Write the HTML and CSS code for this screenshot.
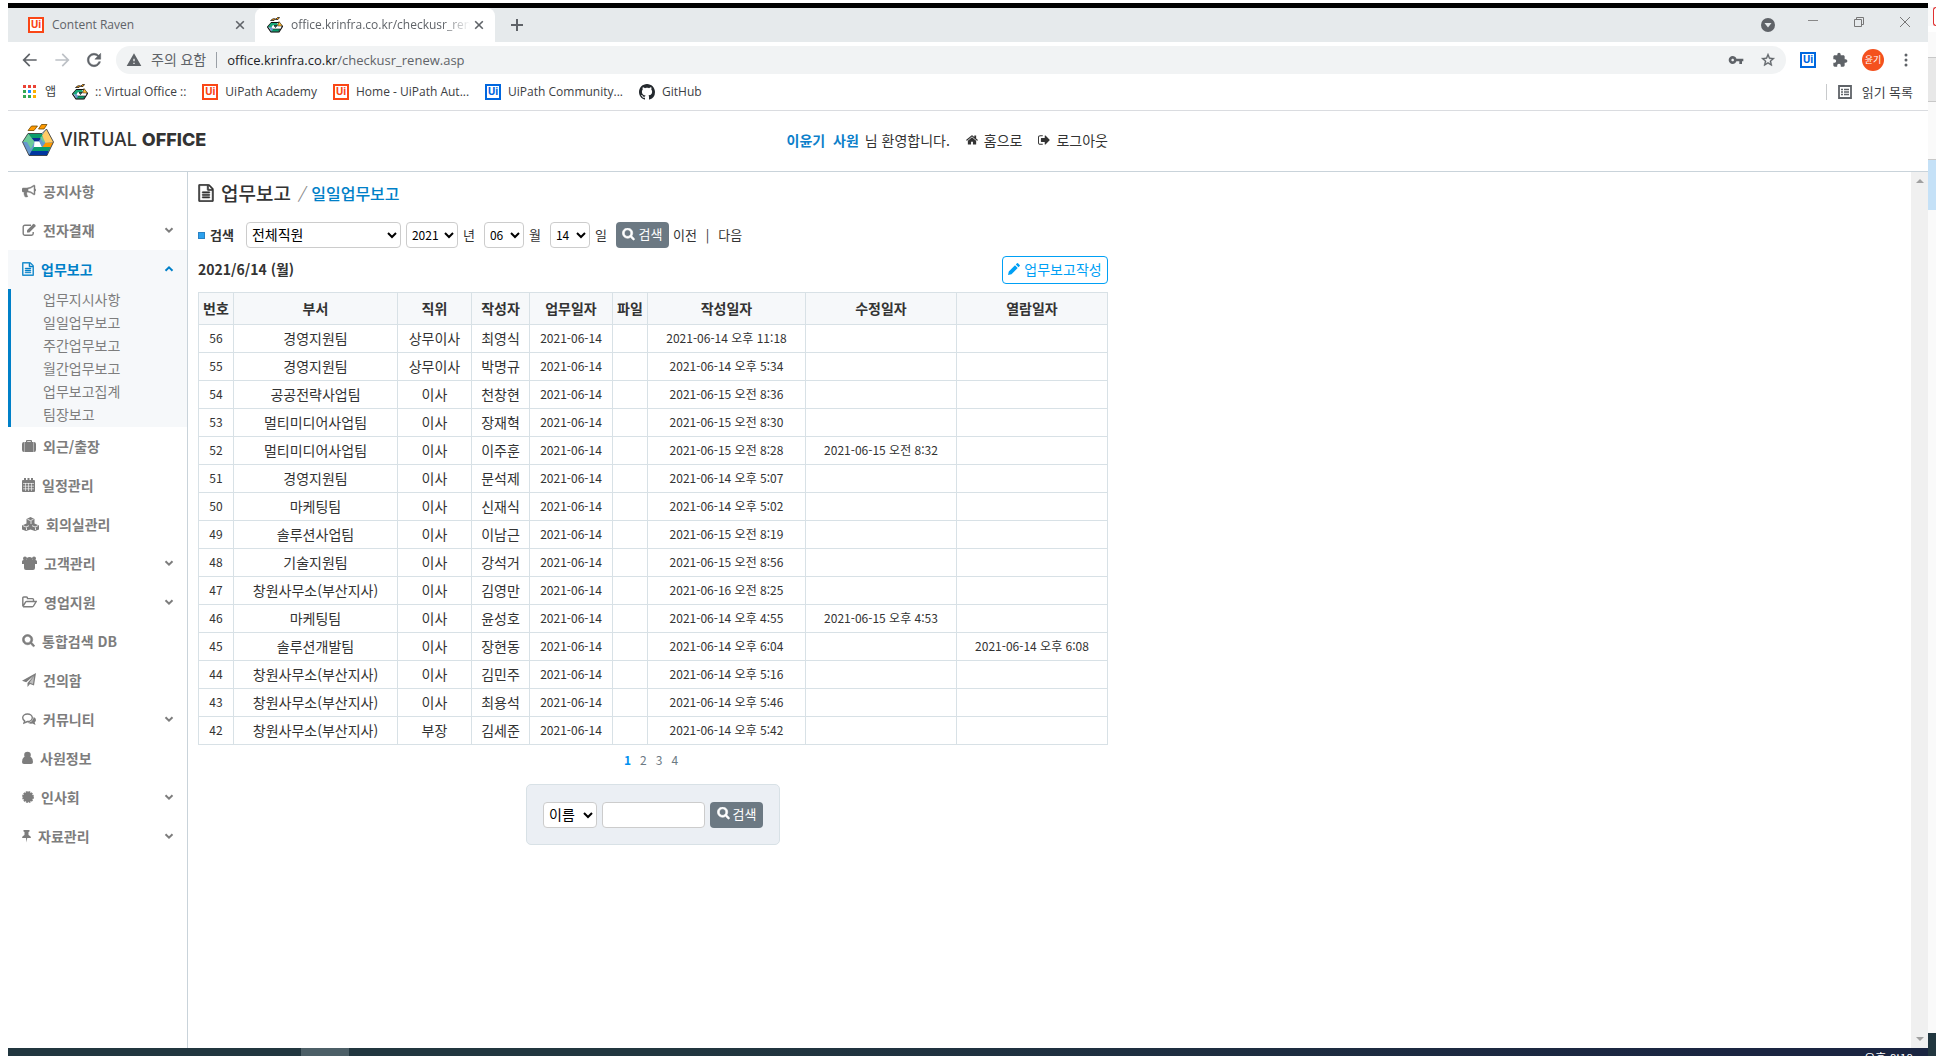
FILE: index.html
```html
<!DOCTYPE html>
<html lang="ko">
<head>
<meta charset="utf-8">
<title>:: Virtual Office ::</title>
<link rel="stylesheet" href="styles.css">
</head>
<body>
<svg class="defs" aria-hidden="true">
  <defs>
    <symbol id="search" viewBox="0 128 1792 1792"><path stroke="currentColor" stroke-width="90" d="M1216 832q0-185-131.500-316.500t-316.500-131.500-316.500 131.500-131.500 316.500 131.500 316.500 316.500 131.500 316.500-131.500 131.500-316.500zm512 832q0 52-38 90t-90 38q-54 0-90-38l-343-342q-179 124-399 124-143 0-273.500-55.500t-225-150-150-225-55.500-273.500 55.500-273.500 150-225 225-150 273.500-55.500 273.500 55.500 225 150 150 225 55.500 273.500q0 220-124 399l343 343q37 37 37 90z"/></symbol>
    <symbol id="doc" viewBox="96 -32 1600 1856"><path stroke="currentColor" stroke-width="60" d="M1596 380q28 28 48 76t20 88v1152q0 40-28 68t-68 28h-1344q-40 0-68-28t-28-68v-1600q0-40 28-68t68-28h896q40 0 88 20t76 48zm-444-244v376h376q-10-29-22-41l-313-313q-12-12-41-22zm384 1528v-1024h-416q-40 0-68-28t-28-68v-416h-768v1536h1280zm-1024-864q0-14 9-23t23-9h704q14 0 23 9t9 23v64q0 14-9 23t-23 9h-704q-14 0-23-9t-9-23v-64zm736 224q14 0 23 9t9 23v64q0 14-9 23t-23 9h-704q-14 0-23-9t-9-23v-64q0-14 9-23t23-9h704zm0 256q14 0 23 9t9 23v64q0 14-9 23t-23 9h-704q-14 0-23-9t-9-23v-64q0-14 9-23t23-9h704z"/></symbol>
    <symbol id="down" viewBox="0 0 10 10"><path d="M1.500 3.300 5 6.700 8.500 3.300" fill="none" stroke="currentColor" stroke-width="2"/></symbol>
    <symbol id="up" viewBox="0 0 10 10"><path d="M1.500 6.700 5 3.300 8.500 6.700" fill="none" stroke="currentColor" stroke-width="2"/></symbol>
    <symbol id="cross" viewBox="0 0 10 10"><path d="M1.200 1.200 8.800 8.800M8.800 1.200 1.200 8.800" fill="none" stroke="currentColor" stroke-width="1.600"/></symbol>
    <symbol id="brand" viewBox="0 0 32 32">
      <path d="M6 6.500 9.500 2h6L12 6.500zM16.500 5 19.500.5h5.500L22 5z" fill="#f90" stroke="#704a00" stroke-width=".8"/>
      <path d="M6 9.500 .5 18 7 31.500h18L31.500 18 24.500 5 20 10z" fill="#6799ce"/>
      <path d="M6 9.500h14l2.500 4.500H9z" fill="#0a9c6c"/><path d="M9 14h11l-1 3.500H12z" fill="#0b2d94"/>
      <path d="M6 9.500 12.500 17.500 9 25 5 18H.5z" fill="#6ccb99"/>
      <path d="M12.500 17.500h5l2.500 5.500h-8z" fill="#fff"/>
      <path d="M19.500 13.500 23 19l-3 4-3-6z" fill="#6799ce"/><path d="M20 12l3 5-1 2-4-5z" fill="#6ccb99"/>
      <path d="M24.500 5 31.500 18 23.500 19 20 11.500z" fill="#fc6"/>
      <path d="M31.500 18.500 28.500 23.500H20l3.500-4.800z" fill="#f90"/>
      <path d="M12 23h16.500l-2 4H9.500z" fill="#0a9c6c"/><path d="M9.500 27h17L25 31.500H7z" fill="#0036a0"/>
      <path d="M24.500 5 31.500 18 25 31.500H7L.5 18 6 9.500h14z" fill="none" stroke="#333" stroke-width=".8"/>
    </symbol>
    <symbol id="favicon" viewBox="0 0 16 16">
      <path d="M3.500 3.500 6 1.800h2.500L7 3.500zM8.500 2.500 10.500.5h2L11 2.500z" fill="#f90" stroke="#222" stroke-width=".8"/>
      <path d="M4.500 5.500h7L15.500 9.500 12 15H4L.6 10z" fill="#fff" stroke="#111" stroke-width="1.200"/>
      <path d="M4 6h6l1 2H6l-2 3-3-1z" fill="#18a878"/><path d="M12 4.500 15.500 9 10.500 9z" fill="#fb3" stroke="#111" stroke-width=".5"/>
      <path d="M5 12h8l-1.500 2.700H4z" fill="#0a9c6c" stroke="#111" stroke-width=".6"/><path d="M2 10.500 4.500 14.500 6 12.500 4.500 10z" fill="#6799ce"/>
      <path d="M7 8.500h3l-1.500 2z" fill="#18a878" stroke="#111" stroke-width=".8"/>
    </symbol>
  </defs>
</svg>
<div class="screen">
<div class="window">
  <div class="tabs">
    <div class="tab"><span class="ui">Ui</span><span class="tab-title">Content Raven</span><svg class="x"><use href="#cross"/></svg></div>
    <div class="tab active"><svg class="fav"><use href="#favicon"/></svg><span class="tab-title">office.krinfra.co.kr/checkusr_rene</span><svg class="x"><use href="#cross"/></svg></div>
    <svg class="plus" viewBox="0 0 12 12"><path d="M6 0v12M0 6h12" stroke="#5f6368" stroke-width="2"/></svg>
    <div class="controls">
      <svg width="14" height="14" viewBox="0 0 14 14"><circle cx="7" cy="7" r="7" fill="#5f6368"/><path d="M3.500 5h7L7 9.500z" fill="#e6eaec"/></svg>
      <svg width="10" height="14" viewBox="0 0 10 14"><path d="M0 4.500h10" stroke="#888"/></svg>
      <svg width="10" height="14" viewBox="0 0 10 14"><path d="M.5 3.500h7v7h-7zM2.500 3.500v-2h7v7h-2" fill="none" stroke="#777"/></svg>
      <svg width="10" height="14" viewBox="0 0 10 14"><path d="M0 1l10 10M10 1 0 11" stroke="#777"/></svg>
    </div>
  </div>
  <div class="toolbar">
    <svg class="nav" viewBox="0 0 24 24"><path d="M20 11H6.800l5.600-5.600L11 4l-8 8 8 8 1.400-1.400L6.800 13H20z"/></svg>
    <svg class="nav off" viewBox="0 0 24 24"><path d="M13 4l-1.400 1.400 5.600 5.600H4v2h13.200l-5.600 5.600L13 20l8-8z"/></svg>
    <svg class="nav" viewBox="0 0 24 24"><path d="M17.650 6.350C16.200 4.900 14.210 4 12 4c-4.420 0-7.990 3.580-7.990 8s3.570 8 7.990 8c3.730 0 6.840-2.550 7.730-6h-2.080c-.82 2.330-3.040 4-5.650 4-3.310 0-6-2.690-6-6s2.690-6 6-6c1.660 0 3.140.69 4.220 1.780L13 11h7V4l-2.350 2.350z" stroke="#5f6368" stroke-width=".6"/></svg>
    <div class="address">
      <svg width="16" height="16" viewBox="0 0 24 24"><path d="M1 21h22L12 2 1 21zm12-3h-2v-2h2v2zm0-4h-2v-4h2v4z"/></svg>
      <span class="warn">주의 요함</span>
      <span class="url"><b>office.krinfra.co.kr</b>/checkusr_renew.asp</span>
      <svg width="16" height="16" viewBox="0 0 24 24"><path d="M12.650 10C11.830 7.670 9.610 6 7 6c-3.310 0-6 2.690-6 6s2.690 6 6 6c2.610 0 4.830-1.670 5.650-4H17v4h4v-4h2v-4H12.650zM7 14c-1.100 0-2-.9-2-2s.9-2 2-2 2 .9 2 2-.9 2-2 2z"/></svg>
      <svg width="16" height="16" viewBox="0 0 24 24"><path stroke="#5f6368" stroke-width=".5" d="M22 9.240l-7.190-.62L12 2 9.190 8.630 2 9.240l5.460 4.730L5.820 21 12 17.270 18.180 21l-1.630-7.030L22 9.240zM12 15.400l-3.760 2.270 1-4.280-3.320-2.880 4.380-.38L12 6.100l1.710 4.040 4.380.38-3.320 2.880 1 4.280L12 15.400z"/></svg>
    </div>
    <div class="extensions">
      <span class="ui blue">Ui</span>
      <svg width="16" height="16" viewBox="0 0 24 24"><path d="M20.500 11H19V7c0-1.100-.9-2-2-2h-4V3.500C13 2.120 11.880 1 10.500 1S8 2.120 8 3.500V5H4c-1.100 0-1.990.9-1.990 2v3.800H3.500c1.490 0 2.700 1.210 2.700 2.700s-1.210 2.700-2.700 2.700H2V20c0 1.100.9 2 2 2h3.800v-1.500c0-1.490 1.210-2.700 2.700-2.700 1.490 0 2.700 1.210 2.700 2.700V22H17c1.100 0 2-.9 2-2v-4h1.500c1.380 0 2.500-1.120 2.500-2.500S21.880 11 20.500 11z"/></svg>
      <span class="avatar">윤기</span>
      <svg width="4" height="14" viewBox="0 0 4 14"><circle cx="2" cy="2" r="1.500"/><circle cx="2" cy="7" r="1.500"/><circle cx="2" cy="12" r="1.500"/></svg>
    </div>
  </div>
  <div class="bookmarks">
    <a href="#"><svg width="16" height="16" viewBox="0 0 16 16"><path d="M1 1h3v3H1zM6 1h3v3H6zM11 1h3v3h-3z" fill="#ea4335"/><path d="M1 6h3v3H1zM1 11h3v3H1zM6 11h3v3H6z" fill="#34a853"/><path d="M6 6h3v3H6z" fill="#1a8cff"/><path d="M11 6h3v3h-3zM11 11h3v3h-3z" fill="#fbaf00"/></svg>앱</a>
    <a href="#"><svg class="fav"><use href="#favicon"/></svg>:: Virtual Office ::</a>
    <a href="#"><span class="ui">Ui</span>UiPath Academy</a>
    <a href="#"><span class="ui">Ui</span>Home - UiPath Aut...</a>
    <a href="#"><span class="ui blue">Ui</span>UiPath Community...</a>
    <a href="#"><svg width="16" height="16" viewBox="0 0 16 16"><path fill="#24292e" d="M8 0C3.580 0 0 3.580 0 8c0 3.540 2.290 6.530 5.470 7.590.4.070.55-.17.55-.38 0-.19-.01-.82-.01-1.490-2.010.37-2.530-.49-2.690-.94-.09-.23-.48-.94-.82-1.130-.28-.15-.68-.52-.01-.53.63-.01 1.080.58 1.230.82.72 1.210 1.870.87 2.330.66.070-.52.28-.87.51-1.070-1.780-.2-3.640-.89-3.640-3.950 0-.87.31-1.590.82-2.150-.08-.2-.36-1.020.08-2.120 0 0 .67-.21 2.200.82.64-.18 1.320-.27 2-.27s1.360.09 2 .27c1.530-1.040 2.200-.82 2.200-.82.44 1.100.16 1.920.08 2.120.51.56.82 1.270.82 2.150 0 3.070-1.870 3.750-3.650 3.950.29.25.54.73.54 1.480 0 1.070-.01 1.930-.01 2.200 0 .21.15.46.55.38A8.010 8.010 0 0016 8c0-4.420-3.580-8-8-8z"/></svg>GitHub</a>
    <a href="#" class="reading"><svg width="14" height="14" viewBox="0 0 14 14"><path d="M1 1h12v12H1z" fill="none" stroke="#5f6368" stroke-width="1.800"/><path d="M3 4.500h2M6 4.500h5M3 7h2M6 7h5M3 9.500h2M6 9.500h5" stroke="#5f6368" stroke-width="1.400"/></svg>읽기 목록</a>
  </div>

  <header class="site-header">
    <div class="user-area">
      <a href="#" class="logo"><svg width="32" height="32"><use href="#brand"/></svg><span>VIRTUAL <b>OFFICE</b></span></a>
      <p class="user"><span class="welcome"><b>이윤기&nbsp; 사원</b> 님 환영합니다.</span>
        <a href="#"><svg width="12" height="12" viewBox="64 192 1664 1408"><path d="M1472 992v480q0 26-19 45t-45 19h-384v-384h-256v384h-384q-26 0-45-19t-19-45v-480q0-1 .5-3t.5-3l575-474 575 474q1 2 1 6zm223-69l-62 74q-8 9-21 11h-3q-13 0-21-7l-692-577-692 577q-12 8-24 7-13-2-21-11l-62-74q-8-10-7-23.500t11-21.500l719-599q32-26 76-26t76 26l244 204v-195q0-14 9-23t23-9h192q14 0 23 9t9 23v408l219 182q10 8 11 21.500t-7 23.500z"/></svg>홈으로</a>
        <a href="#"><svg width="12" height="12" viewBox="64 192 1600 1408"><path d="M704 1440q0 4 1 20t.5 26.500-3 23.500-10 19.500-20.500 6.500h-320q-119 0-203.500-84.500t-84.500-203.500v-704q0-119 84.500-203.500t203.500-84.500h320q13 0 22.500 9.500t9.500 22.500q0 4 1 20t.5 26.500-3 23.500-10 19.500-20.500 6.500h-320q-66 0-113 47t-47 113v704q0 66 47 113t113 47h312l11.500 1 11.500 3 8 5.500 7 9 2 13.500zm928-544q0 26-19 45l-544 544q-19 19-45 19t-45-19-19-45v-288h-448q-26 0-45-19t-19-45v-384q0-26 19-45t45-19h448v-288q0-26 19-45t45-19 45 19l544 544q19 19 19 45z"/></svg>로그아웃</a></p>
    </div>
  </header>

  <div class="body">
    <nav class="side">
      <a href="#"><svg width="14" height="14" viewBox="0 0 1792 1792"><path stroke="currentColor" stroke-width="60" d="M1664 640q53 0 90.500 37.500t37.500 90.500-37.500 90.500-90.500 37.500v384q0 52-38 90t-90 38q-417-347-812-380-58 19-91 66t-31 100.500 40 92.500q-20 33-23 65.500t6 58 33.500 55 48 50 61.500 50.500q-29 58-111.500 83t-168.500 11.500-132-55.500q-7-23-29.500-87.500t-32-94.500-23-89-15-101 3.500-98.500 22-110.500h-122q-66 0-113-47t-47-113v-192q0-66 47-113t113-47h480q435 0 896-384 52 0 90 38t38 90v384zm-128 604v-954q-394 302-768 343v270q377 42 768 341z"/></svg>공지사항</a>
      <a href="#"><svg width="14" height="14" viewBox="0 0 14 14"><path d="M9 2.200H3A1.700 1.700 0 0 0 1.200 4v6.500a1.700 1.700 0 0 0 1.800 1.700h6.500a1.700 1.700 0 0 0 1.700-1.700V9" fill="none" stroke="currentColor" stroke-width="1.400"/><path d="M5 7.200 11 1.200a1 1 0 0 1 1.400 0l1 1a1 1 0 0 1 0 1.400l-6 6H5z"/></svg>전자결재<svg class="chev"><use href="#down"/></svg></a>
      <div class="open">
        <a href="#"><svg width="12" height="14"><use href="#doc"/></svg>업무보고<svg class="chev"><use href="#up"/></svg></a>
        <div class="sub">
          <a href="#">업무지시사항</a><a href="#">일일업무보고</a><a href="#">주간업무보고</a><a href="#">월간업무보고</a><a href="#">업무보고집계</a><a href="#">팀장보고</a>
        </div>
      </div>
      <a href="#"><svg width="14" height="14" viewBox="0 0 14 14"><path d="M4 3V2q0-1 1-1h4q1 0 1 1v1h2q2 0 2 2v6q0 2-2 2H2q-2 0-2-2V5q0-2 2-2zm1.200 0h3.600V2.200H5.200z"/><path d="M2.500 3v10M11.500 3v10" stroke="#fff" stroke-width=".4"/></svg>외근/출장</a>
      <a href="#"><svg width="13" height="14" viewBox="0 0 13 14"><path d="M1 2h11q1 0 1 1v10q0 1-1 1H1q-1 0-1-1V3q0-1 1-1z"/><path d="M2 0h2v3.500H2zM5.500 0h2v3.500h-2zM9 0h2v3.500H9z"/><path d="M1 5.500h11M1 8.200h11M1 10.800h11M3.500 5v8M6.500 5v8M9.500 5v8" stroke="#fff" stroke-width=".6"/></svg>일정관리</a>
      <a href="#"><svg width="17" height="14" viewBox="0 0 17 14"><path d="M8.500 0 12.500 2v4.500L17 8.500v4L13 14l-4.500-1.500L4 14 0 12.500v-4l4.500-2V2z"/><path d="M5.500 2.300 8.500 3.600l3-1.300M1 8.700l3 1.300 3-1.300M10 8.700l3 1.300 3-1.300M9 4v3M4.500 10.500V13M13.500 10.500V13" stroke="#fff" fill="none" stroke-width=".8"/></svg>회의실관리</a>
      <a href="#"><svg width="15" height="14" viewBox="0 0 15 14"><circle cx="3" cy="2.500" r="2"/><circle cx="12" cy="2.500" r="2"/><circle cx="7.500" cy="4" r="3"/><path d="M0 8V5.500Q0 4 1.500 4h12Q15 4 15 5.500V8h-2v4q0 2-2 2H4q-2 0-2-2V8z"/></svg>고객관리<svg class="chev"><use href="#down"/></svg></a>
      <a href="#"><svg width="15" height="14" viewBox="0 0 15 14"><path d="M.8 11.500V3q0-1 1-1h2.700q1 0 1 1v.6h5q1 0 1 1v2M.8 11.500 3.700 7q.3-.5 1-.5h9.500L11.500 11q-.5.800-1.200.8H1" fill="none" stroke="currentColor" stroke-width="1.400"/></svg>영업지원<svg class="chev"><use href="#down"/></svg></a>
      <a href="#"><svg width="13" height="14"><use href="#search"/></svg>통합검색 DB</a>
      <a href="#"><svg width="14" height="14" viewBox="0 0 14 14"><path d="M14 0 12 12.500 8 11 5.500 14V10L12 2.500 4.200 9.300 0 7.700z"/><path d="M12.200 3 7.500 9.600l3.500 1.400z" fill="#fff" opacity=".5"/></svg>건의함</a>
      <a href="#"><svg width="14" height="14" viewBox="0 0 14 14"><path d="M5.500 2C8 2 10.300 3.500 10.300 5.700S8 9.500 5.500 9.500L2 11l.6-2.200C1.400 8 .7 7 .7 5.700.7 3.500 3 2 5.500 2z" fill="none" stroke="currentColor" stroke-width="1.400"/><path d="M11.700 5q2.300 1 2.300 3 0 1.500-1.300 2.300L13.500 13l-3-1.500Q7 12 5.300 10.500 11 10.500 11.700 5z"/></svg>커뮤니티<svg class="chev"><use href="#down"/></svg></a>
      <a href="#"><svg width="11" height="14" viewBox="0 0 11 14"><circle cx="5.500" cy="4" r="3.300"/><path d="M2 6h7q2 1.500 2 5 0 2-2 2H2q-2 0-2-2 0-3.500 2-5z"/></svg>사원정보</a>
      <a href="#"><svg width="12" height="14" viewBox="0 0 12 14"><circle cx="6" cy="7" r="5"/><circle cx="6" cy="7" r="5" fill="none" stroke="currentColor" stroke-width="1.800" stroke-dasharray="1.800 .8"/></svg>인사회<svg class="chev"><use href="#down"/></svg></a>
      <a href="#"><svg width="9" height="14" viewBox="0 0 9 14"><path d="M1.500 1h6v1.500l-1 .5v3Q9 7 9 9H5.200L4.500 13.500 4 9H0q0-2 2.500-3V3l-1-.5z"/></svg>자료관리<svg class="chev"><use href="#down"/></svg></a>
    </nav>

    <main class="content">
      <h1><svg width="16" height="18"><use href="#doc"/></svg>업무보고 <i>/</i> <a href="#">일일업무보고</a></h1>
      <form class="filter">
        <span class="bullet"></span><label class="lead" for="emp">검색</label>
        <select id="emp" class="emp"><option>전체직원</option></select>
        <select id="year" class="num year"><option>2021</option></select><label for="year">년</label>
        <select id="month" class="num"><option>06</option></select><label for="month">월</label>
        <select id="day" class="num"><option>14</option></select><label for="day">일</label>
        <button type="button" class="btn"><svg width="13" height="13"><use href="#search"/></svg>검색</button>
        <span class="pager"><a href="#">이전</a><span>|</span><a href="#">다음</a></span>
      </form>
      <div class="date-row"><strong>2021/6/14 (월)</strong><button type="button" class="write"><svg width="12" height="12" viewBox="0 0 12 12"><path d="M0 12 .8 8.500 7 2.300 9.700 5 3.500 11.200zM7.800 1.500l1.200-1.200q.5-.5 1 0L11.700 2q.5.500 0 1L10.500 4.200z"/></svg>업무보고작성</button></div>
      <table>
        <colgroup><col class="c1"><col class="c2"><col class="c3"><col class="c4"><col class="c5"><col class="c6"><col class="c7"><col class="c8"><col class="c9"></colgroup>
        <thead><tr><th>번호</th><th>부서</th><th>직위</th><th>작성자</th><th>업무일자</th><th>파일</th><th>작성일자</th><th>수정일자</th><th>열람일자</th></tr></thead>
        <tbody>
          <tr><td>56</td><td>경영지원팀</td><td>상무이사</td><td>최영식</td><td>2021-06-14</td><td></td><td>2021-06-14 오후 11:18</td><td></td><td></td></tr>
          <tr><td>55</td><td>경영지원팀</td><td>상무이사</td><td>박명규</td><td>2021-06-14</td><td></td><td>2021-06-14 오후 5:34</td><td></td><td></td></tr>
          <tr><td>54</td><td>공공전략사업팀</td><td>이사</td><td>천창현</td><td>2021-06-14</td><td></td><td>2021-06-15 오전 8:36</td><td></td><td></td></tr>
          <tr><td>53</td><td>멀티미디어사업팀</td><td>이사</td><td>장재혁</td><td>2021-06-14</td><td></td><td>2021-06-15 오전 8:30</td><td></td><td></td></tr>
          <tr><td>52</td><td>멀티미디어사업팀</td><td>이사</td><td>이주훈</td><td>2021-06-14</td><td></td><td>2021-06-15 오전 8:28</td><td>2021-06-15 오전 8:32</td><td></td></tr>
          <tr><td>51</td><td>경영지원팀</td><td>이사</td><td>문석제</td><td>2021-06-14</td><td></td><td>2021-06-14 오후 5:07</td><td></td><td></td></tr>
          <tr><td>50</td><td>마케팅팀</td><td>이사</td><td>신재식</td><td>2021-06-14</td><td></td><td>2021-06-14 오후 5:02</td><td></td><td></td></tr>
          <tr><td>49</td><td>솔루션사업팀</td><td>이사</td><td>이남근</td><td>2021-06-14</td><td></td><td>2021-06-15 오전 8:19</td><td></td><td></td></tr>
          <tr><td>48</td><td>기술지원팀</td><td>이사</td><td>강석거</td><td>2021-06-14</td><td></td><td>2021-06-15 오전 8:56</td><td></td><td></td></tr>
          <tr><td>47</td><td>창원사무소(부산지사)</td><td>이사</td><td>김영만</td><td>2021-06-14</td><td></td><td>2021-06-16 오전 8:25</td><td></td><td></td></tr>
          <tr><td>46</td><td>마케팅팀</td><td>이사</td><td>윤성호</td><td>2021-06-14</td><td></td><td>2021-06-14 오후 4:55</td><td>2021-06-15 오후 4:53</td><td></td></tr>
          <tr><td>45</td><td>솔루션개발팀</td><td>이사</td><td>장현동</td><td>2021-06-14</td><td></td><td>2021-06-14 오후 6:04</td><td></td><td>2021-06-14 오후 6:08</td></tr>
          <tr><td>44</td><td>창원사무소(부산지사)</td><td>이사</td><td>김민주</td><td>2021-06-14</td><td></td><td>2021-06-14 오후 5:16</td><td></td><td></td></tr>
          <tr><td>43</td><td>창원사무소(부산지사)</td><td>이사</td><td>최용석</td><td>2021-06-14</td><td></td><td>2021-06-14 오후 5:46</td><td></td><td></td></tr>
          <tr><td>42</td><td>창원사무소(부산지사)</td><td>부장</td><td>김세준</td><td>2021-06-14</td><td></td><td>2021-06-14 오후 5:42</td><td></td><td></td></tr>
        </tbody>
      </table>
      <div class="pages"><a href="#" class="on">1</a><a href="#">2</a><a href="#">3</a><a href="#">4</a></div>
      <form class="find">
        <select class="by" aria-label="검색 조건"><option>이름</option></select>
        <input type="text" aria-label="검색어">
        <button type="button" class="btn"><svg width="13" height="13"><use href="#search"/></svg>검색</button>
      </form>
    </main>
    <div class="scrollbar"><span class="arrow-up"></span><span class="arrow-down"></span></div>
  </div>
  <div class="taskbar"><span class="task"></span><span class="clock">오후 8:18</span></div>
</div>
<div class="behind"><span class="b1"></span><span class="b2"></span><span class="b3"></span><span class="b4"></span><span class="b5"></span><span class="b6"></span><span class="b7"></span></div>
</div>
</body>
</html>
```
FILE: styles.css
```css
* { box-sizing: border-box; }
body {
  margin: 0;
  background: #fff;
  color: #333;
  font: 14px/20px "Noto Sans CJK KR", sans-serif;
}
a { color: inherit; text-decoration: none; }
svg { display: block; flex: none; fill: currentColor; }
.defs { position: absolute; width: 0; height: 0; }
.screen { display: flex; height: 100vh; padding-left: 8px; overflow: hidden; }
.window { flex: 1; min-width: 0; display: flex; flex-direction: column; margin-top: 3px; border-top: 5px solid #000; }

/* browser chrome */
.tabs, .toolbar, .bookmarks { font-family: "Open Sans", "Noto Sans CJK KR", sans-serif; color: #5f6368; flex: none; }
.tabs { display: flex; align-items: stretch; height: 34px; background: #e6eaec; font-size: 12px; }
.tab { width: 247px; display: flex; align-items: center; gap: 8px; padding: 0 10px 0 20px; }
.tab.active { width: 240px; padding: 0 11px 0 12px; background: #fff; border-radius: 8px 8px 0 0; }
.tab-title { flex: 1; min-width: 0; overflow: hidden; white-space: nowrap; }
.active .tab-title { margin-right: -4px; -webkit-mask-image: linear-gradient(90deg, #000 85%, transparent); mask-image: linear-gradient(90deg, #000 85%, transparent); }
.x { width: 10px; height: 10px; }
.fav { width: 16px; height: 16px; }
.ui {
  flex: none; width: 16px; height: 16px; border: 2px solid #fa4616;
  background: #fff; color: #fa4616; font: bold 11px/12px Roboto, sans-serif; text-align: center;
}
.ui.blue { border-color: #0067df; color: #0067df; }
.plus { width: 12px; height: 12px; margin: 11px 0 0 16px; }
.controls { margin-left: auto; display: flex; gap: 36px; padding: 8px 18px 0 0; }
.controls svg:first-child { margin: 2px -3px 0 0; }
.toolbar { display: flex; align-items: center; height: 36px; padding-left: 12px; }
.nav { width: 20px; height: 20px; margin-right: 12px; }
.nav.off { color: #bdc1c6; }
.address { flex: 1; display: flex; align-items: center; height: 28px; padding: 0 10px; border-radius: 14px; background: #f1f3f4; font-size: 14px; }
.warn { margin-left: 9px; padding-right: 10px; border-right: 1px solid #9aa0a6; line-height: 16px; }
.url { flex: 1; margin-left: 10px; font-size: 13px; }
.url b { font-weight: 400; color: #202124; }
.address svg + svg { margin-left: 16px; }
.extensions { display: flex; align-items: center; gap: 16px; padding: 0 20px 0 14px; }
.avatar { width: 22px; height: 22px; margin: 0 4px 0 -2px; border-radius: 50%; background: #f4511e; color: #fff; font-size: 9px; line-height: 22px; text-align: center; }
.bookmarks { display: flex; align-items: center; gap: 16px; height: 33px; padding: 0 15px 4px 14px; border-bottom: 1px solid #dadce0; font-size: 12px; color: #3c4043; }
.bookmarks a { display: flex; align-items: center; gap: 7px; }
.bookmarks .reading { margin-left: auto; padding-left: 11px; border-left: 1px solid #c8cacc; gap: 10px; font-size: 13px; line-height: 16px; }

/* site header */
.site-header { flex: none; height: 61px; border-bottom: 1px solid #c9d3da; }
.user-area { display: flex; align-items: center; justify-content: space-between; width: 1100px; height: 58px; padding-left: 14px; }
.logo { display: flex; align-items: center; gap: 6px; font: 500 18px/20px Inter, sans-serif; }
.logo b { font-weight: 800; }
.user { display: flex; gap: 16px; margin: 0; }
.user a { display: flex; align-items: center; gap: 6px; }
.user .welcome b { color: #0d80ca; margin-right: 2px; }

.body { flex: 1; min-height: 0; display: flex; }
.side { flex: none; width: 180px; border-right: 1px solid #c9d3da; color: #7d7d7d; }
.side a { display: flex; align-items: center; gap: 7px; height: 39px; padding: 0 13px 2px 14px; font-weight: 700; }
.side .chev { width: 10px; height: 10px; margin-left: auto; }
.open { background: #f6f8fa; }
.open > a { color: #0080c8; }
.side .sub { border-left: 3px solid #0080c8; }
.side .sub a { height: 23px; padding-left: 32px; padding-bottom: 3px; font-weight: 400; }

/* report list */
.content { flex: 1; min-width: 0; padding: 7px 10px; }
.content h1 { display: flex; align-items: center; gap: 7px; margin: 0 0 15px; font-size: 19px; line-height: 28px; font-weight: 500; }
.content h1 a { font-size: 16px; color: #0080c8; }
.content h1 i { font-size: 16px; color: #888; font-weight: 400; }
.filter { display: flex; align-items: center; height: 26px; font-size: 13px; }
.bullet { width: 7px; height: 7px; margin-right: 5px; background: #2ca1ee; border: 1px solid #2a82c4; }
.lead { font-weight: 700; margin-right: 8px; }
select, input, button { font: 14px/20px "Noto Sans CJK KR", sans-serif; height: 26px; border: 1px solid #ccc; border-radius: 4px; background: #fff; color: #000; padding: 0 1px 2px; }
.emp { width: 155px; margin: 0 5px 0 4px; }
.num { width: 40px; font-size: 12px; }
.year { width: 52px; }
.filter .num + label { width: 12px; margin: 0 9px 0 5px; }
.btn { display: flex; align-items: center; justify-content: center; gap: 3px; width: 53px; border: 0; background: #6c7983; color: #fff; font-size: 13px; }
.pager { display: flex; gap: 9px; margin-left: 4px; }
.date-row { display: flex; align-items: center; justify-content: space-between; width: 910px; height: 28px; margin: 8px 0; }
.date-row strong { padding-bottom: 2px; }
.write { display: flex; align-items: center; justify-content: center; gap: 4px; width: 106px; height: 28px; border-color: #00a0f5; color: #00a0f5; }
table { width: 910px; table-layout: fixed; border-collapse: collapse; text-align: center; }
th, td { padding: 0 0 2px; border: 1px solid #d8e1e6; height: 28px; white-space: nowrap; }
th { height: 32px; background: #f6f8fa; }
td:first-child, td:nth-child(n+5) { font-size: 12px; }
.c1, .c6 { width: 35px; }
.c2 { width: 164px; }
.c3 { width: 74px; }
.c4 { width: 58px; }
.c5 { width: 83px; }
.c7 { width: 158px; }
.c8, .c9 { width: 151px; }
.pages { display: flex; justify-content: center; gap: 9px; width: 906px; padding-top: 5px; font-size: 12px; color: #6c7983; }
.pages .on { font-weight: 700; color: #0090f0; }
.find { display: flex; align-items: center; gap: 5px; width: 254px; height: 61px; margin: 14px 0 0 328px; padding-left: 16px; border: 1px solid #d8e1e6; border-radius: 5px; background: #ebeff4; }
.by { width: 54px; }
.find input { width: 103px; }

.scrollbar { width: 17px; background: #f0f0f0; display: flex; flex-direction: column; justify-content: space-between; align-items: center; padding: 7px 0; }
.scrollbar span { border: 4px solid transparent; }
.scrollbar .arrow-up { border-top: 0; border-bottom-color: #a0a0a0; }
.scrollbar .arrow-down { border-bottom: 0; border-top-color: #a0a0a0; }
.taskbar { flex: none; height: 8px; display: flex; overflow: hidden; background: linear-gradient(90deg, #21363f, #21363f 35%, #1a2541 90%); }
.task { width: 48px; margin-left: 293px; background: #4c5f67; }
.clock { margin: 2px 15px 0 auto; color: #fff; font-size: 12px; line-height: 16px; }

/* window showing behind the right edge */
.behind { width: 8px; display: flex; flex-direction: column; background: #fafafa; }
.behind span { border-bottom: 1px solid #c8c8c8; background: #fafafa; }
.behind .b1 { height: 7px; background: #fff; border: 0; }
.behind .b2 { height: 19px; margin-left: 5px; border: 1px solid #e03030; border-right: 0; border-radius: 3px 0 0 3px; background: #fff; }
.behind .b3 { height: 6px; border: 0; background: #fff; }
.behind .b4 { height: 26px; }
.behind .b5 { height: 44px; background: #e8e8e8; }
.behind .b6 { height: 58px; }
.behind .b7 { height: 50px; border: 0; background: #c5e1f7; }
.behind::after { content: ""; height: 23px; margin-top: auto; background: #21363f; }
```
